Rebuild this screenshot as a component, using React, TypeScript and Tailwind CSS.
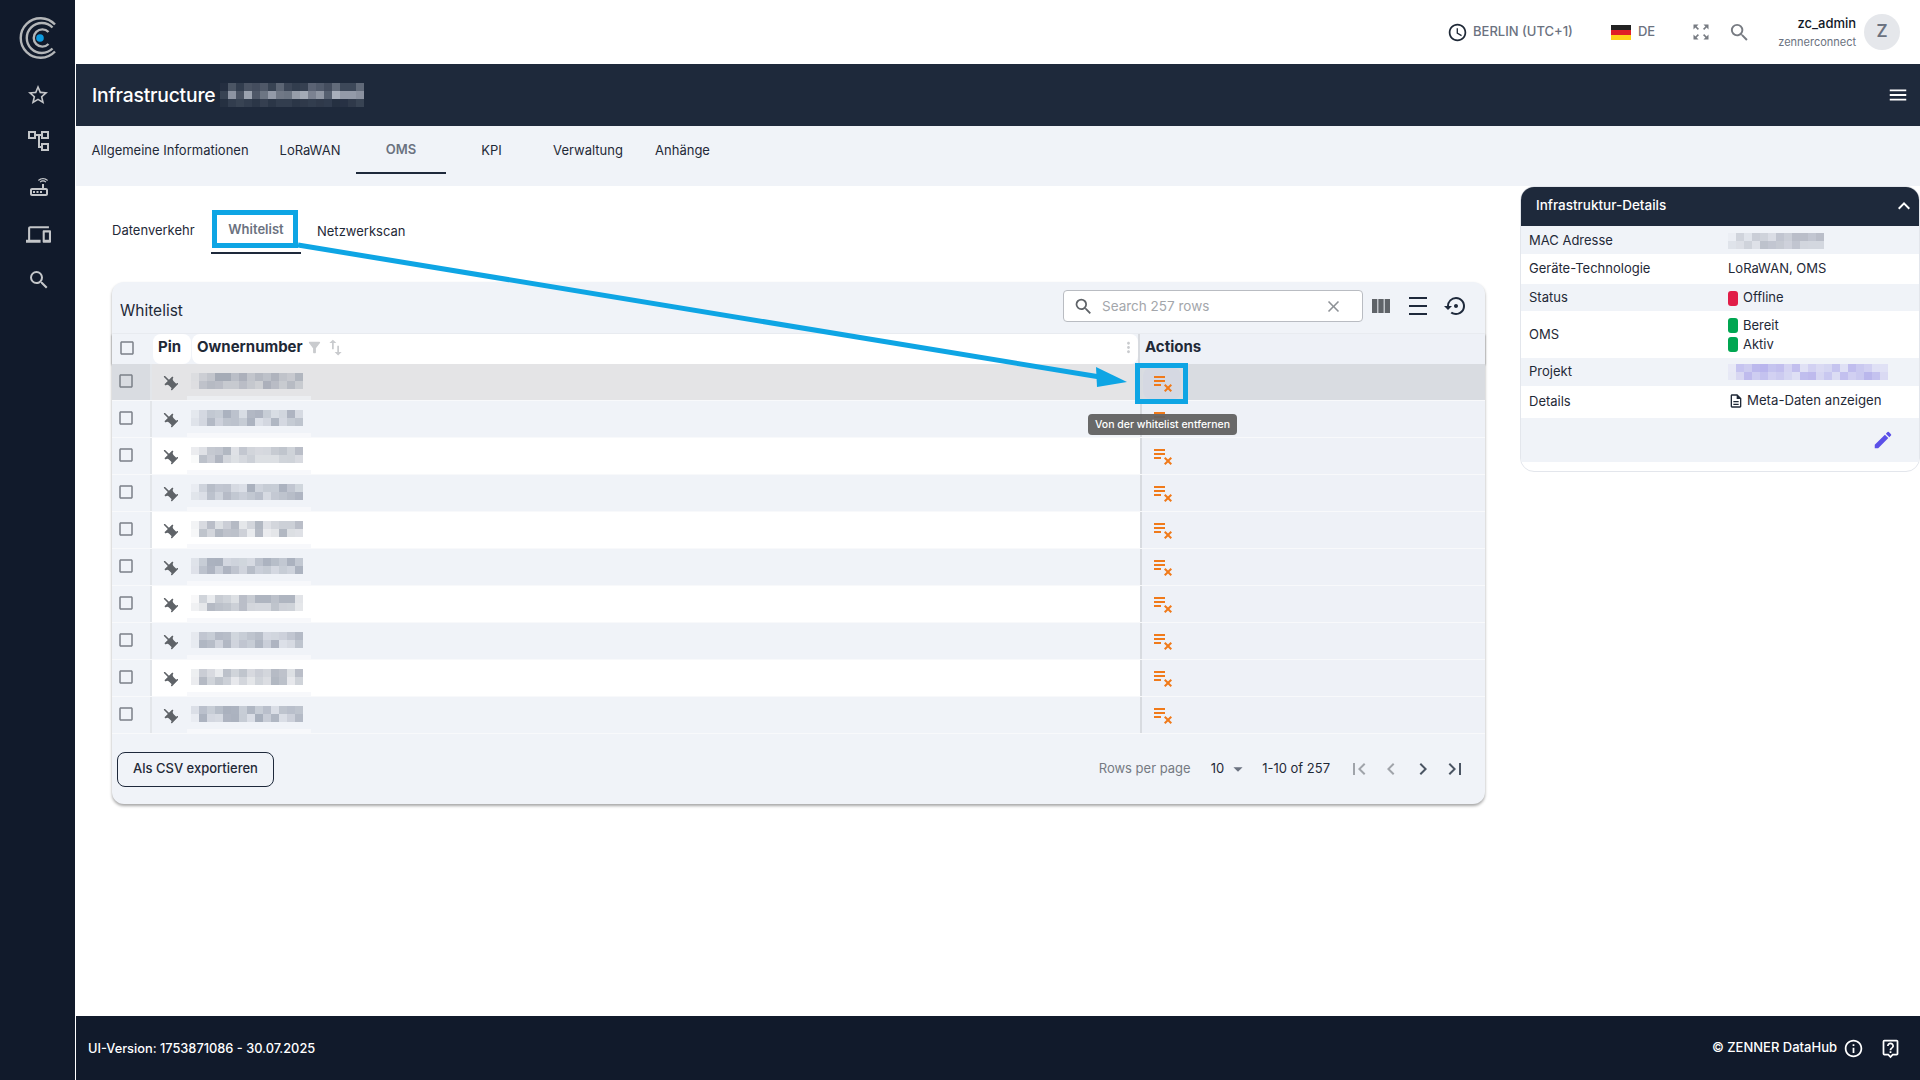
import type { ReactNode } from "react"
import {
  MdAccessTime,
  MdArrowDropDown,
  MdCheckBoxOutlineBlank,
  MdChevronLeft,
  MdChevronRight,
  MdClear,
  MdDensityMedium,
  MdEdit,
  MdExpandLess,
  MdFilterAlt,
  MdFirstPage,
  MdInfoOutline,
  MdLastPage,
  MdMenu,
  MdMoreVert,
  MdOutlineDescription,
  MdOutlineDevices,
  MdOutlineLiveHelp,
  MdOutlineRouter,
  MdPlaylistRemove,
  MdPushPin,
  MdSearch,
  MdSettingsBackupRestore,
  MdStarBorder,
  MdSwapVert,
  MdViewColumn,
  MdZoomOutMap,
} from "react-icons/md"

const ROWS = [1, 2, 3, 4, 5, 6, 7, 8, 9, 10]

// stands in for the pixelated parts of the screenshot
function Mosaic({
  cols,
  rows,
  seed,
  rgb,
  max,
  fade = [],
}: {
  cols: number
  rows: number
  seed: number
  rgb: string
  max: number
  fade?: number[]
}) {
  const cells: number[] = []
  let v = seed * 7919 + 13
  for (let i = 0; i < cols * rows; i++) {
    v = (v * 1103515245 + 12345) % 2147483648
    const rowFade = fade[Math.floor(i / cols)] ?? 1
    const edge = i % cols === 0 ? 0.3 : 1
    cells.push((0.25 + ((v >> 8) % 100) / 133) * rowFade * edge)
  }
  return (
    <div className="grid" style={{ gridTemplateColumns: `repeat(${cols}, 8px)`, gridAutoRows: "8px" }}>
      {cells.map((c, i) => (
        <span key={i} style={{ backgroundColor: `rgba(${rgb}, ${(c * max).toFixed(2)})` }} />
      ))}
    </div>
  )
}

function MainTab({ label, active, width }: { label: string; active?: boolean; width: string }) {
  return (
    <div
      className={`flex h-[48px] items-center justify-center text-[13px] ${width} ${
        active ? "border-b-2 border-[#1e293b] pt-[1px] font-semibold text-[#6b7280]" : "pt-[2px] text-[#1f2937]"
      }`}
    >
      {label}
    </div>
  )
}

function Dot({ color }: { color: string }) {
  return <span className={`h-[15px] w-[10px] rounded-[3px] ${color}`} />
}

function DetailRow({ label, children, cls }: { label: string; children: ReactNode; cls: string }) {
  return (
    <div className={`flex items-center px-[8px] text-[13px] text-[#1f2937] ${cls}`}>
      <div className="w-[199px] shrink-0">{label}</div>
      <div>{children}</div>
    </div>
  )
}

function TableRow({ n }: { n: number }) {
  const hovered = n === 1
  const stripe = n % 2 === 1
  return (
    <div className="flex h-[37px] border-b border-[#f8f9fb] last:border-[#dde1e7]">
      <div
        className={`flex w-[40px] shrink-0 items-center justify-center border-r-2 border-[#e3e6ea] pb-[3px] pr-[10px] ${
          hovered ? "bg-[#d9dce1]" : "bg-[#f0f3f8]"
        }`}
      >
        <MdCheckBoxOutlineBlank className="text-[#7b8088]" size={18} />
      </div>
      <div
        className={`relative flex w-[988px] shrink-0 items-center ${
          hovered ? "bg-[#e4e4e6]" : stripe ? "bg-white" : "bg-[#f0f3f8]"
        }`}
      >
        <div className="flex w-[38px] shrink-0 justify-center pb-[1px] pr-[3px]">
          <MdPushPin className="rotate-[135deg] text-[#5f6368]" size={19} />
        </div>
        <div className="ml-[1px] pb-[3px]">
          <Mosaic cols={14} rows={2} seed={n} rgb="110, 120, 140" max={0.55} />
        </div>
        <div className={`absolute bottom-0 left-[35px] h-[4px] w-[124px] ${hovered ? "bg-[#eceef1]" : "bg-[#f7f8fb]"}`} />
      </div>
      <div
        className={`flex flex-1 items-center border-l-2 border-[#d8dbe0] pb-[3px] pl-[9px] ${hovered ? "bg-[#d9dce1]" : "bg-[#eef1f7]"}`}
      >
        <MdPlaylistRemove className="text-[#f07a1a]" size={24} />
      </div>
    </div>
  )
}

export default function App() {
  return (
    <div className="relative flex h-screen w-full overflow-hidden bg-white font-['Inter',sans-serif]">
      <aside className="flex w-[75px] shrink-0 flex-col items-center bg-[#111a2b] text-[#c4c6c9]">
        <svg viewBox="0 0 44 44" className="ml-[5px] mt-[16px] h-[44px] w-[44px]" fill="none" stroke="#b4b6b8" strokeWidth="2.4">
          <path d="M37 8.5A19.8 19.8 0 1 0 37 35.5" />
          <path d="M34.5 11.5A15 15 0 1 0 34.5 32.5" />
          <path d="M30.5 16A8.6 8.6 0 1 0 30.5 28" />
          <circle cx="22" cy="22" r="3.8" fill="#0d9be0" stroke="none" />
        </svg>
        <MdStarBorder className="ml-[1px] mt-[23px]" size={24} />
        <svg viewBox="0 0 24 24" className="ml-[3px] mt-[22px]" width="24" height="24" fill="none" stroke="currentColor" strokeWidth="2">
          <rect x="2" y="3" width="6" height="6" />
          <rect x="15" y="3" width="6" height="6" />
          <rect x="15" y="15" width="6" height="6" />
          <path d="M8 6h7M12 6v12h3" />
        </svg>
        <MdOutlineRouter className="ml-[2px] mt-[22px]" size={24} />
        <MdOutlineDevices className="ml-[1px] mt-[23px]" size={25} />
        <MdSearch className="ml-[3px] mt-[21px]" size={24} />
      </aside>
      <main className="ml-px flex min-w-0 flex-1 flex-col">
        <header className="flex h-[64px] shrink-0 items-center text-[13px] font-medium text-[#6b7280]">
          <div className="ml-[1371px] flex items-center gap-[5px]">
            <MdAccessTime className="text-[#1f2937]" size={21} />
            <span>BERLIN (UTC+1)</span>
          </div>
          <div className="ml-[38px] flex flex-col">
            <span className="h-[5px] w-[20px] bg-[#222222]" />
            <span className="h-[5px] w-[20px] bg-[#e01f26]" />
            <span className="h-[5px] w-[20px] bg-[#ffd118]" />
          </div>
          <span className="ml-[7px]">DE</span>
          <MdZoomOutMap className="ml-[36px] text-[#777b82]" size={20} />
          <MdSearch className="ml-[17px] text-[#777b82]" size={23} />
          <div className="ml-[20px] w-[85px] text-right leading-none">
            <div className="text-[13px] font-medium text-[#111827]">zc_admin</div>
            <div className="mt-[7px] text-[11px] font-normal text-[#6b7280]">zennerconnect</div>
          </div>
          <div className="ml-[8px] flex h-[36px] w-[36px] items-center justify-center rounded-full bg-[#e5e7eb] text-[17px] font-semibold text-[#6b7280]">
            Z
          </div>
        </header>
        <div className="flex h-[62px] shrink-0 items-center justify-between bg-[#1e293b] pl-[16px] pr-[11px]">
          <div className="flex items-center gap-[5px]">
            <span className="text-[19.3px] font-medium tracking-[-0.2px] text-white">Infrastructure</span>
            <Mosaic cols={18} rows={3} seed={42} rgb="220, 225, 235" max={0.75} fade={[0.5, 1, 0.2]} />
          </div>
          <MdMenu className="text-white" size={22} />
        </div>
        <nav className="flex h-[60px] shrink-0 bg-[#f0f3f8]">
          <MainTab label="Allgemeine Informationen" width="w-[188px]" />
          <MainTab label="LoRaWAN" width="w-[92px]" />
          <MainTab label="OMS" width="w-[90px]" active />
          <MainTab label="KPI" width="w-[91px]" />
          <MainTab label="Verwaltung" width="w-[102px]" />
          <MainTab label="Anhänge" width="w-[87px]" />
        </nav>
        <div className="flex min-h-0 flex-1">
          <section className="w-[1444px] shrink-0 pl-[20px] pt-[24px]">
            <div className="flex h-[44px] text-[13px] text-[#1f2937]">
              <div className="flex w-[115px] items-center pb-[2px] pl-[16px]">Datenverkehr</div>
              <div className="flex w-[90px] items-center justify-center border-b-2 border-[#1e293b] pb-[3px] font-semibold text-[#6b7280]">
                Whitelist
              </div>
              <div className="flex items-center px-[16px]">Netzwerkscan</div>
            </div>
            <div className="ml-[16px] mt-[28px] w-[1373px] rounded-[12px] bg-[#f0f3f8] shadow-[0_2px_3px_rgba(0,0,0,0.35)]">
              <div className="flex h-[52px] items-center pb-[4px] pl-[8px] pr-[17px]">
                <span className="pt-[10px] text-[15.5px] text-[#1f2937]">Whitelist</span>
                <div className="ml-auto flex h-[32px] w-[300px] items-center rounded-[4px] border border-[#b9bcc2] bg-white pl-[9px] pr-[19px] text-[13.5px] text-[#a3a6ab]">
                  <MdSearch className="text-[#5f6368]" size={21} />
                  <span className="ml-[8px]">Search 257 rows</span>
                  <MdClear className="ml-auto text-[#8d9196]" size={19} />
                </div>
                <MdViewColumn className="ml-[6px] text-[#5f6368]" size={24} />
                <MdDensityMedium className="ml-[13px] text-[#1e293b]" size={24} />
                <MdSettingsBackupRestore className="ml-[14px] text-[#1e293b]" size={24} />
              </div>
              <div className="flex h-[30px] text-[15px] font-bold text-[#1f2937] shadow-[0_1px_2px_rgba(0,0,0,0.45)]">
                <div className="flex w-[40px] shrink-0 items-center justify-center pb-[2px] pr-[10px]">
                  <MdCheckBoxOutlineBlank className="text-[#7b8088]" size={18} />
                </div>
                <div className="ml-[1px] flex w-[38px] shrink-0 items-center justify-center rounded-[8px] bg-white pb-[3px] pr-[5px]">Pin</div>
                <div className="ml-[1px] flex w-[946px] shrink-0 items-center rounded-[8px] bg-white pb-[3px] pl-[5px] pr-[1px]">
                  <span>Ownernumber</span>
                  <MdFilterAlt className="ml-[3px] text-[#c9cbce]" size={17} />
                  <MdSwapVert className="ml-[2px] text-[#c9cbce]" size={21} />
                  <MdMoreVert className="ml-auto text-[#c9cbce]" size={17} />
                </div>
                <div className="flex flex-1 items-center border-l-2 border-[#d8dbe0] bg-[#eef1f7] pb-[3px] pl-[5px]">Actions</div>
              </div>
              {ROWS.map((n) => (
                <TableRow key={n} n={n} />
              ))}
              <div className="flex h-[70px] items-center pl-[5px] pr-[18px] text-[13px]">
                <button className="h-[35px] w-[157px] rounded-[8px] border border-[#1e293b] text-[13px] font-medium text-[#1f2937]">
                  Als CSV exportieren
                </button>
                <span className="ml-auto text-[#757a82]">Rows per page</span>
                <span className="ml-[20px] text-[#1f2937]">10</span>
                <MdArrowDropDown className="ml-[3px] text-[#6b7280]" size={22} />
                <span className="ml-[13px] text-[#1f2937]">1-10 of 257</span>
                <MdFirstPage className="ml-[17px] text-[#a0a4aa]" size={24} />
                <MdChevronLeft className="ml-[8px] text-[#a0a4aa]" size={24} />
                <MdChevronRight className="ml-[8px] text-[#4b5563]" size={24} />
                <MdLastPage className="ml-[8px] text-[#4b5563]" size={24} />
              </div>
            </div>
          </section>
          <section className="w-[400px] shrink-0">
            <div className="h-[286px] overflow-hidden rounded-[14px] border border-[#e3e6ec] bg-white">
              <div className="flex h-[39px] items-center justify-between bg-[#1e293b] pb-[2px] pl-[15px] pr-[3px] text-[13.5px] font-medium text-white">
                Infrastruktur-Details
                <MdExpandLess size={24} />
              </div>
              <DetailRow label="MAC Adresse" cls="h-[28px] bg-[#f0f3f8] pt-[1px]">
                <Mosaic cols={12} rows={2} seed={7} rgb="150, 155, 170" max={0.6} />
              </DetailRow>
              <DetailRow label="Geräte-Technologie" cls="h-[30px] bg-white">
                LoRaWAN, OMS
              </DetailRow>
              <DetailRow label="Status" cls="h-[27px] bg-[#f0f3f8] pt-[1px]">
                <div className="flex items-center gap-[5px]">
                  <Dot color="bg-[#e11d48]" />
                  Offline
                </div>
              </DetailRow>
              <DetailRow label="OMS" cls="h-[47px] bg-white pt-[1px]">
                <div className="flex flex-col gap-[4px]">
                  <div className="flex h-[15px] items-center gap-[5px]">
                    <Dot color="bg-[#00a651]" />
                    Bereit
                  </div>
                  <div className="flex h-[15px] items-center gap-[5px]">
                    <Dot color="bg-[#00a651]" />
                    Aktiv
                  </div>
                </div>
              </DetailRow>
              <DetailRow label="Projekt" cls="h-[28px] bg-[#f0f3f8]">
                <Mosaic cols={20} rows={2} seed={11} rgb="130, 120, 225" max={0.5} />
              </DetailRow>
              <DetailRow label="Details" cls="h-[32px] bg-white">
                <div className="flex items-center gap-[3px] pb-[2px] text-[13.2px]">
                  <MdOutlineDescription className="text-[#1f2937]" size={16} />
                  Meta-Daten anzeigen
                </div>
              </DetailRow>
              <div className="flex h-[44px] items-center justify-end bg-[#f0f3f8] pr-[25px]">
                <MdEdit className="text-[#5b50e8]" size={22} />
              </div>
            </div>
          </section>
        </div>
        <footer className="flex h-[64px] shrink-0 items-center bg-[#111a2b] pl-[12px] pr-[19px] text-[13px] font-medium text-white">
          <span className="pt-[2px] text-[12.8px]">UI-Version: 1753871086 - 30.07.2025</span>
          <span className="ml-auto">© ZENNER DataHub</span>
          <MdInfoOutline className="ml-[6px]" size={21} />
          <MdOutlineLiveHelp className="ml-[16px]" size={21} />
        </footer>
      </main>

      {/* annotations drawn on top of the screenshot */}
      <div className="absolute left-[212px] top-[210px] h-[38px] w-[86px] border-[5px] border-[#0ea5e4]" />
      <div className="absolute left-[1135px] top-[363px] flex h-[41px] w-[53px] items-center justify-center border-[5px] border-[#0ea5e4]">
        <div className="flex h-full w-[38px] items-center justify-center rounded-[8px] bg-[#d5d8e2] pb-[3px] pl-[2px]">
          <MdPlaylistRemove className="text-[#f07a1a]" size={24} />
        </div>
      </div>
      <svg className="pointer-events-none absolute left-0 top-0" width="1920" height="1080">
        <path d="M298 245L1100 377" stroke="#0ea5e4" strokeWidth="5" />
        <path d="M1127 382L1096 367L1097 387Z" fill="#0ea5e4" />
      </svg>
      <div className="absolute left-[1088px] top-[414px] flex h-[21px] w-[149px] items-center justify-center rounded-[4px] bg-[rgba(97,97,97,0.95)] text-[10.5px] font-medium text-white">
        Von der whitelist entfernen
      </div>
    </div>
  )
}
